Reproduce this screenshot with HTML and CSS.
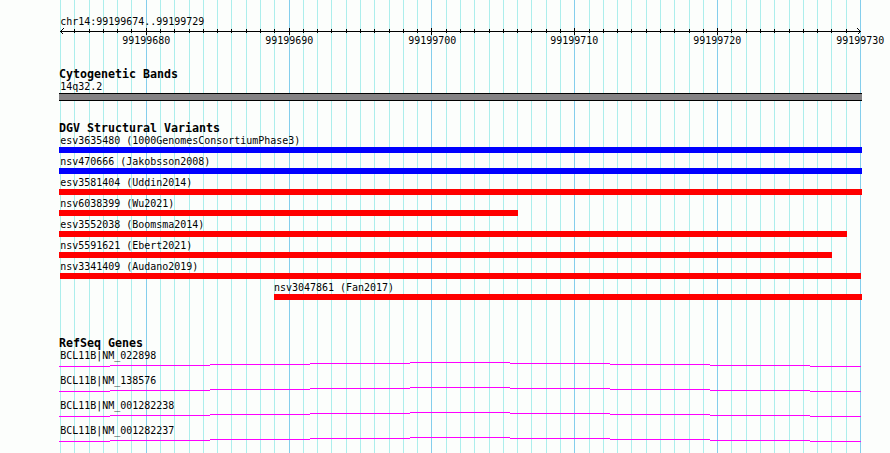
FILE: index.html
```
<!DOCTYPE html>
<html lang="en">
<head>
<meta charset="utf-8">
<title>chr14:99199674..99199729</title>
<link rel="stylesheet" href="styles.css">
</head>
<body>
<main class="browser">
  <svg class="grid" width="890" height="453" shape-rendering="crispEdges" aria-hidden="true"><path id="minor" class="minor"/><path id="major" class="major"/></svg>

  <header class="ruler">
    <p class="label region">chr14:99199674..99199729</p>
    <svg class="axis" width="803" height="9" shape-rendering="crispEdges" aria-hidden="true">
      <path d="M1 4.5H802"/>
      <path id="ticks"/>
      <path class="arrow" d="M4.5 1.5L1.5 4.5L4.5 7.5M798.5 1.5L801.5 4.5L798.5 7.5"/>
    </svg>
    <div class="scale">
      <span class="label">99199680</span><span class="label">99199690</span><span class="label">99199700</span><span class="label">99199710</span><span class="label">99199720</span><span class="label">99199730</span>
    </div>
  </header>

  <section class="track bands">
    <h2>Cytogenetic Bands</h2>
    <p class="label">14q32.2</p>
    <div class="band"></div>
  </section>

  <section class="track variants">
    <h2>DGV Structural Variants</h2>
    <div class="feature"><p class="label">esv3635480 (1000GenomesConsortiumPhase3)</p><div class="bar gain" style="width:803px"></div></div>
    <div class="feature"><p class="label">nsv470666 (Jakobsson2008)</p><div class="bar gain" style="width:803px"></div></div>
    <div class="feature"><p class="label">esv3581404 (Uddin2014)</p><div class="bar loss" style="width:803px"></div></div>
    <div class="feature"><p class="label">nsv6038399 (Wu2021)</p><div class="bar loss" style="width:459px"></div></div>
    <div class="feature"><p class="label">esv3552038 (Boomsma2014)</p><div class="bar loss" style="width:788px"></div></div>
    <div class="feature"><p class="label">nsv5591621 (Ebert2021)</p><div class="bar loss" style="width:773px"></div></div>
    <div class="feature"><p class="label">nsv3341409 (Audano2019)</p><div class="bar loss" style="width:801px;margin-left:1px"></div></div>
    <div class="feature inset"><p class="label">nsv3047861 (Fan2017)</p><div class="bar loss" style="width:588px"></div></div>
  </section>

  <section class="track genes">
    <h2>RefSeq Genes</h2>
    <div class="gene"><p class="label">BCL11B|NM_022898</p><svg class="intron" width="802" height="5"><use href="#intron"/></svg></div>
    <div class="gene"><p class="label">BCL11B|NM_138576</p><svg class="intron" width="802" height="5"><use href="#intron"/></svg></div>
    <div class="gene"><p class="label">BCL11B|NM_001282238</p><svg class="intron" width="802" height="5"><use href="#intron"/></svg></div>
    <div class="gene"><p class="label">BCL11B|NM_001282237</p><svg class="intron" width="802" height="5"><use href="#intron"/></svg></div>
  </section>

  <svg class="defs" width="0" height="0" aria-hidden="true"><defs>
    <path id="intron" d="M0 4.5H51M51 3.5H151M151 2.5H251M251 1.5H351M351 .5H451M451 1.5H551M551 2.5H651M651 3.5H751M751 4.5H802"/>
  </defs></svg>
</main>
<script src="grid.js"></script>
</body>
</html>
```
FILE: styles.css
```
* { box-sizing: border-box; }

body {
  margin: 0;
  background: #fcfefc;
  color: #000;
}

h2, p { margin: 0; }

svg { display: block; fill: none; }

.browser {
  position: relative;
  width: 890px;
  height: 453px;
  padding-left: 59px;
  overflow: hidden;
  isolation: isolate;
}

.grid {
  position: absolute;
  top: 0;
  left: 0;
  z-index: -1;
}

.minor { stroke: #aceeec; }
.major { stroke: #84ceec; }

.defs { position: absolute; }

/* Narrow six-pixel cell for every label */
.label {
  width: max-content;
  height: 15px;
  padding-left: 1.3px;
  font: 11px/15px "DejaVu Sans Mono", monospace;
  white-space: pre;
  transform: scaleX(.906);
  transform-origin: 0 0;
}

h2 {
  height: 14px;
  font: bold 11.63px/14px "DejaVu Sans Mono", monospace;
  white-space: pre;
}

.ruler { padding-top: 14px; }
.region { height: 13px; }
.axis { stroke: #000; }

.scale {
  display: grid;
  grid-template-columns: repeat(6, 142.8px);
  height: 15px;
  margin: -3px 0 0 62px;
}

.bands { margin-top: 19px; }
.bands .label { height: 12px; line-height: 12px; }

.band {
  width: 803px;
  height: 8px;
  background: #848284;
  border: solid #000;
  border-width: 1px 0;
}

.variants { margin-top: 20px; }
.variants h2 { height: 11px; }
.feature { height: 21px; }
.feature .label { line-height: 17px; }
.bar { height: 6px; }
.gain { background: #00f; }
.loss { background: #f00; }
.inset { padding-left: 215px; }
.inset .label { padding-left: 0; }

.genes { margin-top: 36px; }
.genes h2 { height: 12px; }
.gene { height: 25px; }
.gene .label { height: 14px; }
.intron { stroke: #f0f; shape-rendering: crispEdges; }
```
FILE: grid.js
```
let minor = "", major = "", ticks = "";
for (let n = 0; n <= 56; n++) {
  const x = Math.round(60 + n * 800 / 56) + 0.5;
  const isMajor = n % 10 === 6;
  if (isMajor) major += `M${x} 0V453`;
  else minor += `M${x} 0V453`;
  if (n > 0 && n < 56) ticks += isMajor ? `M${x - 59} 1V8` : `M${x - 59} 2V6`;
}
document.getElementById("minor").setAttribute("d", minor);
document.getElementById("major").setAttribute("d", major);
document.getElementById("ticks").setAttribute("d", ticks);
```
